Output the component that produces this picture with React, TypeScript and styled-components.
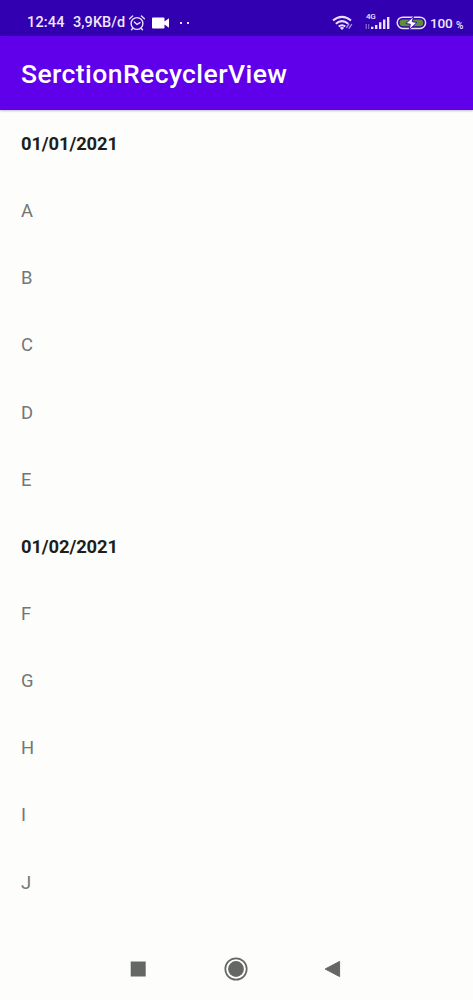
import React from 'react';
import styled, { createGlobalStyle } from 'styled-components';

const GlobalStyle = createGlobalStyle`
  * { box-sizing: border-box; }
  body { margin: 0; background: #fdfefc; font-family: Roboto, sans-serif; }
`;

const Screen = styled.div`
  width: 473px;
  height: 1000px;
  display: flex;
  flex-direction: column;
  overflow: hidden;
  background: #fdfefc;
`;

const StatusBar = styled.header`
  height: 36px;
  flex: none;
  display: flex;
  align-items: center;
  padding: 10px 10px 0 27px;
  background: #3200b0;
  color: #f0e6ff;
  font-size: 14.5px;
  line-height: 18px;
  font-weight: 500;
  white-space: nowrap;
  svg { flex: none; display: block; }
`;

const Clock = styled.span`
  width: 46px;
  letter-spacing: 0.15px;
`;

const Speed = styled.span`
  width: 55px;
  letter-spacing: 0.05px;
`;

const Spacer = styled.span`
  flex: 1;
`;

const BatteryLevel = styled.span`
  width: 26px;
  margin-left: 3px;
  font-size: 13.6px;
  letter-spacing: -0.2px;
`;

const Percent = styled.span`
  width: 7px;
  padding-top: 5px;
  font-size: 10px;
`;

const AppBar = styled.div`
  height: 74px;
  flex: none;
  display: flex;
  align-items: center;
  padding: 2px 21px 0;
  background: #6000ea;
  box-shadow: 0 1px 2px rgba(60, 20, 100, 0.3);
`;

const Title = styled.h1`
  margin: 0;
  color: #fff;
  font-size: 26.5px;
  font-weight: 500;
  line-height: 32px;
  letter-spacing: 0.42px;
`;

const List = styled.main`
  flex: 1;
  min-height: 0;
`;

const Row = styled.div<{ $header?: boolean }>`
  height: 67.15px;
  display: flex;
  align-items: center;
  padding: 1px 21px 0;
  font-size: 18.4px;
  line-height: 22px;
  font-weight: ${({ $header }) => ($header ? 700 : 400)};
  letter-spacing: ${({ $header }) => ($header ? '-0.12px' : 'normal')};
  color: ${({ $header }) => ($header ? '#1d1f1e' : '#747674')};
`;

const NavBar = styled.nav`
  height: 63px;
  flex: none;
  display: flex;
  justify-content: space-between;
  align-items: center;
  padding: 0 132px 0 130px;
  svg { display: block; }
`;

const AlarmIcon = () => (
  <svg width="18" height="18" viewBox="0 0 18 18" fill="none" stroke="#eadfff" strokeWidth="1.4" strokeLinecap="round">
    <circle cx="9" cy="9.5" r="5.9" />
    <path d="M1.6 4.8 4.6 2M16.4 4.8 13.4 2M6.3 8 9 10.4 12 8.6M4.8 14.2 3.5 15.8M13.2 14.2l1.3 1.6" />
  </svg>
);

const CameraIcon = () => (
  <svg width="18" height="12" viewBox="0 0 18 12" fill="#fff">
    <path d="M1 .5h10.5a1 1 0 0 1 1 1v3L17 1.3v9.4l-4.5-3.2v3a1 1 0 0 1-1 1H1a1 1 0 0 1-1-1v-9a1 1 0 0 1 1-1Z" />
  </svg>
);

const DotsIcon = () => (
  <svg width="12" height="4" viewBox="0 0 12 4" fill="#eadfff">
    <rect x="1" y="1" width="2" height="2" />
    <rect x="8" y="1" width="2" height="2" />
  </svg>
);

const WifiIcon = () => (
  <svg width="22" height="16" viewBox="0 0 22 16" fill="none" stroke="#eadfff" strokeWidth="2">
    <path d="M2 5.6Q11 -1.8 20 5.6M4.8 8.7q6.2-5.2 12.4 0M7.7 11.6q3.3-2.7 6.6 0" />
    <path d="M8.8 12.8q2.2-1.6 4.4 0L11 15Z" fill="#eadfff" stroke="none" />
    <path d="m15.4 12.8 2.8-4.2M17.8 13.6l3-4.4" stroke="#a58be0" strokeWidth="1.4" />
  </svg>
);

const SignalLabel = styled.span`
  position: absolute;
  left: 1px;
  top: -2px;
  font-size: 8px;
  line-height: 8px;
  letter-spacing: -0.4px;
`;

const SignalBox = styled.span`
  position: relative;
  display: block;
  width: 25px;
  height: 16px;
  margin-left: 12px;
`;

const SignalIcon = () => (
  <SignalBox>
    <SignalLabel>4G</SignalLabel>
    <svg width="25" height="16" viewBox="0 0 25 16" fill="#eadfff">
      <path d="M.5 9H2v5H.5zM3 9h1.3v5H3z" fill="#7658c8" />
      <path d="M6 11.8h2.4V14H6zM10 10h2.4v4H10zM14 7.3h2.4V14H14zM18 4.6h2.4V14H18zM22 2h2.4v12H22z" />
    </svg>
  </SignalBox>
);

const BatteryIcon = () => (
  <svg width="31" height="16" viewBox="0 0 31 16">
    <rect x="1.2" y="2.2" width="28.4" height="11.2" rx="5.6" fill="#3200b0" stroke="#eadfff" strokeWidth="1.5" />
    <rect x="3.5" y="4.4" width="23.8" height="6.8" rx="3.4" fill="#5d8f35" />
    <path d="M17.6 1.4 9.8 8.5l4.5.7-1.1 5.5 7.7-7.2-4.7-.8Z" fill="#fff" stroke="#3200b0" strokeWidth=".9" />
  </svg>
);

const Gap = styled.span<{ $w: number }>`
  width: ${({ $w }) => $w}px;
`;

const rows = ['01/01/2021', 'A', 'B', 'C', 'D', 'E', '01/02/2021', 'F', 'G', 'H', 'I', 'J'];

export default function App() {
  return (
    <>
      <GlobalStyle />
      <Screen>
        <StatusBar>
          <Clock>12:44</Clock>
          <Speed>3,9KB/d</Speed>
          <AlarmIcon />
          <Gap $w={6} />
          <CameraIcon />
          <Gap $w={9} />
          <DotsIcon />
          <Spacer />
          <WifiIcon />
          <SignalIcon />
          <Gap $w={6} />
          <BatteryIcon />
          <BatteryLevel>100</BatteryLevel>
          <Percent>%</Percent>
        </StatusBar>
        <AppBar>
          <Title>SerctionRecyclerView</Title>
        </AppBar>
        <List>
          {rows.map((label) => (
            <Row key={label} $header={label.includes('/')}>
              {label}
            </Row>
          ))}
        </List>
        <NavBar>
          <svg width="16" height="16" viewBox="0 0 16 16">
            <rect x=".7" y=".5" width="15" height="15" fill="#656765" />
          </svg>
          <svg width="26" height="24" viewBox="0 0 26 24">
            <circle cx="14" cy="12" r="10.7" fill="none" stroke="#656765" strokeWidth="1.7" />
            <circle cx="14" cy="12" r="7.9" fill="#656765" />
          </svg>
          <svg width="17" height="18" viewBox="0 0 17 18">
            <path d="M15.6 1.4v15.2L1.2 9Z" fill="#656765" stroke="#656765" strokeWidth="1" strokeLinejoin="round" />
          </svg>
        </NavBar>
      </Screen>
    </>
  );
}
